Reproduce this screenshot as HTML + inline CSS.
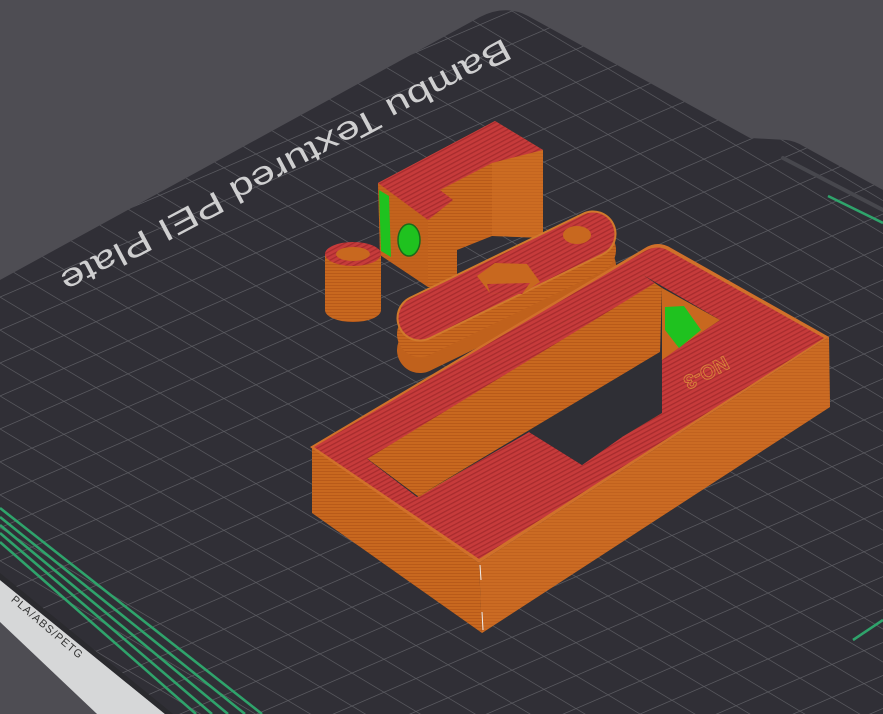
<!DOCTYPE html>
<html><head><meta charset="utf-8"><style>
html,body{margin:0;padding:0;background:#4e4d53;width:883px;height:714px;overflow:hidden}
svg{display:block}
</style></head><body>
<svg width="883" height="714" viewBox="0 0 883 714" xmlns="http://www.w3.org/2000/svg">
<defs>
<pattern id="grid" width="40" height="40" patternUnits="userSpaceOnUse" patternTransform="matrix(0.8,0.48,-0.8,0.344,0,0)">
<path d="M0 0H40M0 0V40" stroke="#5a5a60" stroke-width="2" fill="none"/>
</pattern>
<pattern id="red" width="4" height="4" patternUnits="userSpaceOnUse" patternTransform="rotate(62)">
<rect width="4" height="4" fill="#c63b3b"/><rect width="1.3" height="4" fill="#a82c2e"/>
</pattern>
<pattern id="org" width="3" height="3" patternUnits="userSpaceOnUse">
<rect width="3" height="3" fill="#c8681f"/><rect width="3" height="1" fill="#b85a1a"/>
</pattern>
<clipPath id="plateclip"><path d="M0 280 L480 17 Q505 4 528 16 L750 138 L786 140 Q795 141 803 146 L883 190 L883 714 L97 714 L0 622 Z"/></clipPath>
</defs>
<rect width="883" height="714" fill="#4e4d53"/>
<path d="M0 280 L480 17 Q505 4 528 16 L750 138 L786 140 Q795 141 803 146 L883 190 L883 714 L97 714 L0 622 Z" fill="#302f36"/>
<rect width="883" height="714" fill="url(#grid)" clip-path="url(#plateclip)"/>
<path d="M0 580 L165 714 L97 714 L0 622 Z" fill="#d6d7d8"/>
<path d="M0 573 L173 714 L165 714 L0 580 Z" fill="#2a2a2e"/>
<text x="0" y="0" transform="translate(45,630) rotate(40.5)" font-family="Liberation Sans, sans-serif" font-size="11" fill="#333" text-anchor="middle" letter-spacing="1">PLA/ABS/PETG</text>
<g stroke="#2fa36b" stroke-width="2.6" fill="none">
<path d="M0 508 L262 714"/><path d="M0 517 L245 714"/><path d="M0 525 L228 714"/><path d="M0 533 L212 714"/><path d="M0 542 L196 714"/>
<path d="M828 196 L883 223"/><path d="M853 640 L883 620"/>
</g>
<path d="M783 158 L883 210" stroke="#47474d" stroke-width="4" stroke-linecap="round"/>
<text x="0" y="0" transform="translate(286,166) rotate(152)" font-family="Liberation Sans, sans-serif" font-size="32" fill="#cfcfd0" text-anchor="middle" dominant-baseline="central" textLength="505" lengthAdjust="spacingAndGlyphs">Bambu Textured PEI Plate</text>

<!-- block -->
<path d="M378 183 L495 121 L543 150 L543 238 L492 236 L457 250 L457 287 L428 287 L380 255 Z" fill="url(#org)"/>
<path d="M378 183 L428 220 L428 287 L380 255 Z" fill="#bf611c" opacity="0.6"/>
<path d="M378 183 L495 121 L543 150 L492 163 L440 190 L453 200 L428 220 Z" fill="url(#red)"/>
<path d="M492 163 L543 150 L543 238 L492 236 Z" fill="#cf7026" opacity="0.5"/>
<path d="M379 190 L389 196 L391 257 L381 251 Z" fill="#1fc21f"/>
<ellipse cx="409" cy="240" rx="11" ry="16" fill="#1fc21f" stroke="#1a6a1a" stroke-width="1.5"/>
<!-- cylinder -->
<path d="M325 254 L325 310 A28 12 0 0 0 381 310 L381 254 Z" fill="url(#org)"/>
<ellipse cx="353" cy="254" rx="28" ry="12" fill="url(#red)"/>
<ellipse cx="353" cy="254" rx="17" ry="7" fill="#c8681f"/>
<!-- link -->
<g stroke-linecap="round">
<path d="M420 350 L593 266" stroke="#c0611c" stroke-width="46"/>
<path d="M420 334 L593 250" stroke="url(#org)" stroke-width="46"/>
<path d="M420 318 L593 234" stroke="#d0792c" stroke-width="47"/>
<path d="M420 318 L593 234" stroke="url(#red)" stroke-width="43"/>
</g>
<path d="M477 276 L495 263 L527 264 L540 282 L522 294 L490 293 Z" fill="#c8681f"/>
<path d="M487 284 L530 283 L522 294 L490 293 Z" fill="url(#red)"/>
<ellipse cx="577" cy="235" rx="14" ry="9" fill="#c8681f"/>
<!-- big part -->
<path d="M312 447 L479 563 L482 633 L312 513 Z" fill="url(#org)"/>
<path d="M479 563 L829 337 L830 407 L482 633 Z" fill="url(#org)"/>
<path d="M479 563 L829 337 L830 407 L482 633 Z" fill="#d2722a" opacity="0.35"/>
<path d="M310 447 L645 248 Q658 240 671 248 L829 337 L479 563 Z" fill="#d0702a"/>
<path d="M314 447 L645 251 Q658 244 669 251 L824 338 L479 559 Z" fill="url(#red)"/>
<path d="M353 448 L643 275 L720 320 L680 347 L622 385 L622 437 L582 465 L529 432 L417 497 Z" fill="#2f2f35"/>
<path d="M353 448 L643 275 L662 288 L660 352 L419 497 Z" fill="url(#org)"/>
<path d="M353 448 L643 275 L655 283 L367 459 Z" fill="url(#red)"/>
<path d="M662 288 L720 320 L680 347 L662 360 Z" fill="#c8681f"/>
<path d="M622 385 L662 360 L662 413 L622 437 Z" fill="url(#org)"/>
<path d="M417 497 L529 432 L582 465 L622 437 L662 413 L662 360 L660 352 Z" fill="#2f2f35"/>
<path d="M665 307 L684 306 L701 330 L679 348 L665 330 Z" fill="#1fc21f"/>
<text x="0" y="0" transform="translate(706,372) rotate(152)" font-family="Liberation Sans, sans-serif" font-size="20" font-weight="bold" fill="none" stroke="#d98a3a" stroke-width="0.8" text-anchor="middle" dominant-baseline="central">NO-3</text>
<path d="M480 565 L481 580 M482 612 L483 630" stroke="#eee" stroke-width="1"/>
</svg>
</body></html>
